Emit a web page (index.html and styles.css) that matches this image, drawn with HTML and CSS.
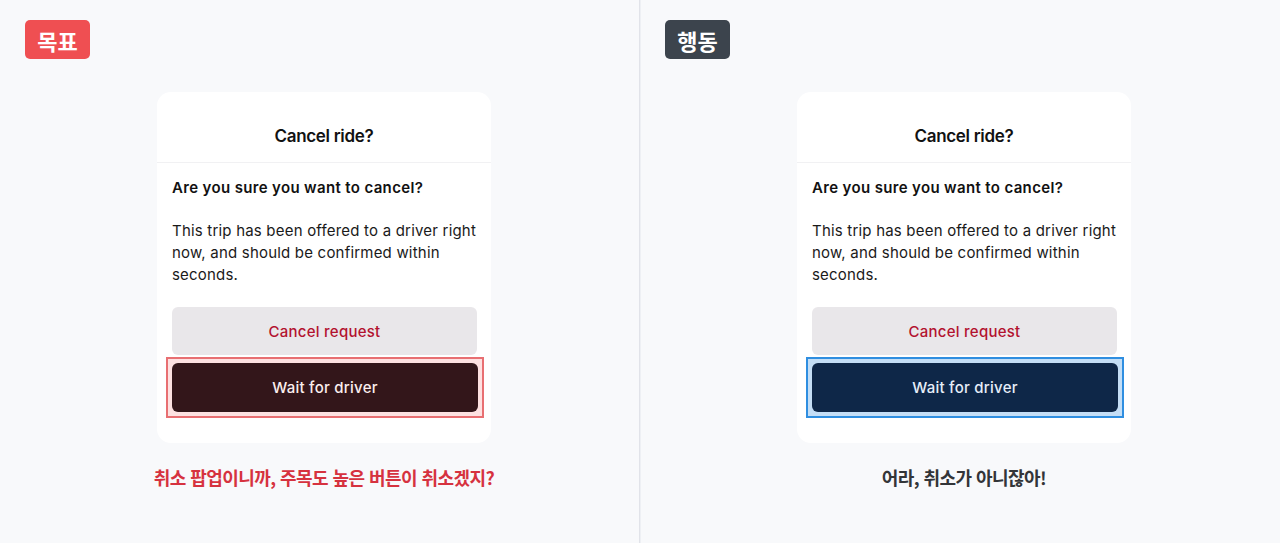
FILE: index.html
```html
<!DOCTYPE html>
<html lang="ko">
<head>
<meta charset="utf-8">
<title>Cancel ride</title>
<link rel="stylesheet" href="styles.css">
</head>
<body>
<main class="page">
  <section class="panel panel-left">
    <div class="badge badge-goal">목표</div>
    <div class="stage">
      <div class="card">
        <div class="card-header">Cancel ride?</div>
        <div class="card-body">
          <p class="question">Are you sure you want to cancel?</p>
          <p class="desc">This trip has been offered to a driver right now, and should be confirmed within seconds.</p>
          <div class="actions">
            <button class="btn btn-cancel">Cancel request</button>
            <div class="focus focus-red">
              <button class="btn btn-wait btn-wait-maroon">Wait for driver</button>
            </div>
          </div>
        </div>
      </div>
      <p class="caption caption-red">취소 팝업이니까, 주목도 높은 버튼이 취소겠지?</p>
    </div>
  </section>
  <div class="divider"></div>
  <section class="panel panel-right">
    <div class="badge badge-action">행동</div>
    <div class="stage">
      <div class="card">
        <div class="card-header">Cancel ride?</div>
        <div class="card-body">
          <p class="question">Are you sure you want to cancel?</p>
          <p class="desc">This trip has been offered to a driver right now, and should be confirmed within seconds.</p>
          <div class="actions">
            <button class="btn btn-cancel">Cancel request</button>
            <div class="focus focus-blue">
              <button class="btn btn-wait btn-wait-navy">Wait for driver</button>
            </div>
          </div>
        </div>
      </div>
      <p class="caption caption-dark">어라, 취소가 아니잖아!</p>
    </div>
  </section>
</main>
</body>
</html>
```

FILE: styles.css
```css
* { box-sizing: border-box; }
html, body {
  margin: 0;
  padding: 0;
  background: #f8f9fb;
}
body {
  font-family: Inter, "Noto Sans", "Noto Sans CJK KR", sans-serif;
  color: #111;
}
.page {
  display: flex;
  width: 1280px;
  height: 543px;
}
.panel {
  padding: 20px 0 0 24px;
  display: flex;
  flex-direction: column;
  align-items: flex-start;
}
.panel-left { width: 639px; }
.panel-right { width: 640px; }
.divider {
  width: 1px;
  background: #e1e3e9;
  box-shadow: 1px 0 0 #eef0f4;
}
.badge {
  width: 65px;
  height: 39px;
  margin-left: 1px;
  border-radius: 5px;
  color: #fff;
  font-family: "Noto Sans CJK KR", sans-serif;
  font-weight: 700;
  font-size: 22px;
  letter-spacing: 0;
  display: flex;
  align-items: center;
  justify-content: center;
}
.badge-goal { background: #ef4f52; }
.badge-action { background: #3c444d; }

.stage {
  margin-top: 33px;
  margin-left: 133px;
  width: 334px;
  display: flex;
  flex-direction: column;
  align-items: center;
}
.card {
  width: 334px;
  background: #fff;
  border-radius: 14px;
  padding-bottom: 25px;
}
.card-header {
  padding: 33px 0 15px;
  text-align: center;
  font-size: 17px;
  line-height: 22px;
  font-weight: 600;
  letter-spacing: -0.3px;
  border-bottom: 1px solid #f1f1f3;
}
.card-body {
  padding: 14px 14px 0 15px;
}
.question {
  margin: 0;
  font-size: 15px;
  line-height: 22px;
  font-weight: 600;
  letter-spacing: 0.35px;
}
.desc {
  margin: 21px 0 0;
  font-size: 15px;
  line-height: 22px;
  font-weight: 400;
  letter-spacing: 0.2px;
  color: #1a1a1a;
}
.actions {
  margin-top: 21px;
  display: flex;
  flex-direction: column;
}
.btn {
  display: block;
  width: 100%;
  height: 48px;
  border: 0;
  border-radius: 6px;
  font-family: Inter, "Noto Sans", sans-serif;
  font-size: 15px;
  font-weight: 500;
  letter-spacing: 0.25px;
}
.btn-cancel {
  background: #e9e7ea;
  color: #b3122f;
}
.focus {
  margin: 2px -7px 0 -6px;
  padding: 4px;
  border: 2px solid;
}
.focus-red {
  border-color: #e86f72;
  background: #fde1e1;
}
.focus-blue {
  border-color: #2f8ee0;
  background: #c4def6;
}
.btn-wait { height: 49px; }
.btn-wait-maroon {
  background: #33161a;
  color: #fbeeee;
}
.btn-wait-navy {
  background: #0e2748;
  color: #e6eef9;
}
.caption {
  margin: 22px 0 0;
  white-space: nowrap;
  font-family: "Noto Sans CJK KR", sans-serif;
  font-weight: 700;
  font-size: 18px;
  line-height: 24px;
  letter-spacing: -0.55px;
}
.caption-red { color: #d6323f; }
.caption-dark { color: #333538; }
```
